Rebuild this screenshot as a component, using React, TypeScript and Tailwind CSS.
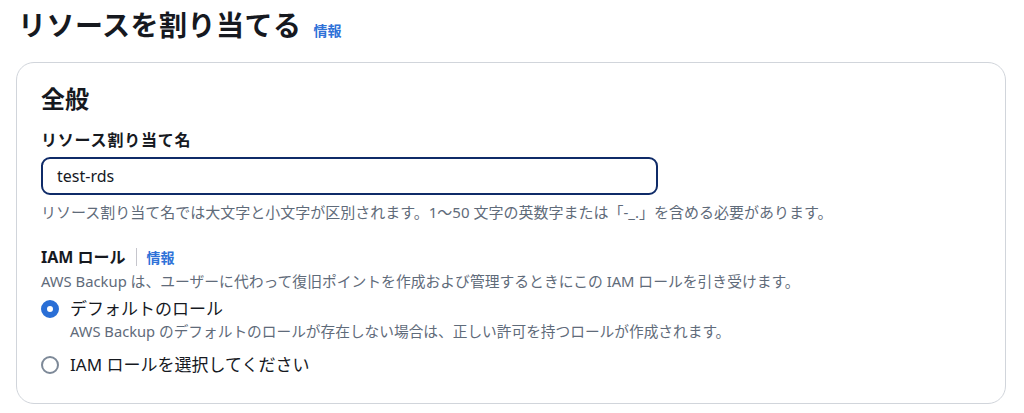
import { useState } from 'react';

export default function App() {
  const [name, setName] = useState('test-rds');
  const [role, setRole] = useState<'default' | 'custom'>('default');

  return (
    <div className="min-h-screen bg-white font-['Noto_Sans','Noto_Sans_CJK_JP',sans-serif] text-[#16191f]">
      <div className="px-[18px] pt-[5px]">
        {/* Page header */}
        <div className="flex items-baseline gap-[12px]">
          <h1 className="text-[28px] font-bold leading-[40px] tracking-[0.5px]">リソースを割り当てる</h1>
          <a href="#" className="text-[14px] font-bold text-[#2f72d8]">情報</a>
        </div>

        {/* Container */}
        <div className="mt-[17px] ml-[-2px] w-[990px] rounded-[18px] border border-[#d1d5db] bg-white px-[24px] pt-[20px] pb-[27px]">
          <h2 className="text-[24px] font-bold leading-[32px]">全般</h2>

          {/* Name field */}
          <div className="mt-[14px]">
            <label className="block text-[16px] font-bold leading-[22px] tracking-[0.8px]">リソース割り当て名</label>
            <input
              value={name}
              onChange={(e) => setName(e.target.value)}
              className="mt-[6px] block h-[38px] w-[617px] rounded-[9px] border-2 border-[#0f2b68] px-[14px] text-[16px] text-[#16191f] outline-none"
            />
            <p className="mt-[7px] text-[15px] leading-[20px] text-[#5f6b7a]">
              リソース割り当て名では大文字と小文字が区別されます。1〜50 文字の英数字または「-_.」を含める必要があります。
            </p>
          </div>

          {/* IAM role */}
          <div className="mt-[24px]">
            <div className="flex items-center">
              <span className="text-[16px] font-bold leading-[22px]">IAM ロール</span>
              <span className="mx-[10px] h-[18px] w-px bg-[#c6c6cd]" />
              <a href="#" className="text-[14px] font-bold text-[#2f72d8]">情報</a>
            </div>
            <p className="mt-[1px] text-[14.8px] leading-[24px] text-[#5f6b7a]">
              AWS Backup は、ユーザーに代わって復旧ポイントを作成および管理するときにこの IAM ロールを引き受けます。
            </p>

            <div className="mt-[5px] flex flex-col">
              <label className="flex cursor-pointer items-start gap-[11px]" onClick={() => setRole('default')}>
                <span
                  className={
                    role === 'default'
                      ? 'mt-[2px] h-[18px] w-[18px] shrink-0 rounded-full border-[6px] border-[#2a6fd6] bg-white'
                      : 'mt-[2px] h-[18px] w-[18px] shrink-0 rounded-full border-2 border-[#7d8998] bg-white'
                  }
                />
                <span className="flex flex-col">
                  <span className="text-[17px] leading-[22px]">デフォルトのロール</span>
                  <span className="text-[14.7px] leading-[22px] text-[#5f6b7a]">
                    AWS Backup のデフォルトのロールが存在しない場合は、正しい許可を持つロールが作成されます。
                  </span>
                </span>
              </label>
              <label className="mt-[12px] flex cursor-pointer items-start gap-[11px]" onClick={() => setRole('custom')}>
                <span
                  className={
                    role === 'custom'
                      ? 'mt-[2px] h-[18px] w-[18px] shrink-0 rounded-full border-[6px] border-[#2a6fd6] bg-white'
                      : 'mt-[2px] h-[18px] w-[18px] shrink-0 rounded-full border-2 border-[#7d8998] bg-white'
                  }
                />
                <span className="text-[17px] leading-[22px]">IAM ロールを選択してください</span>
              </label>
            </div>
          </div>
        </div>
      </div>
    </div>
  );
}
